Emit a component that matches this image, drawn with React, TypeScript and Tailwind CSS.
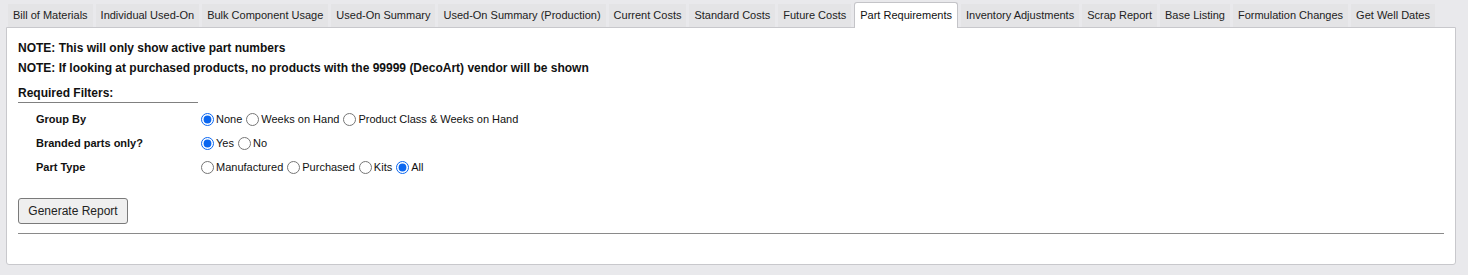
import React from "react";

const tabs = [
  "Bill of Materials",
  "Individual Used-On",
  "Bulk Component Usage",
  "Used-On Summary",
  "Used-On Summary (Production)",
  "Current Costs",
  "Standard Costs",
  "Future Costs",
  "Part Requirements",
  "Inventory Adjustments",
  "Scrap Report",
  "Base Listing",
  "Formulation Changes",
  "Get Well Dates",
];

function Radio({ name, label, checked }: { name: string; label: string; checked?: boolean }) {
  return (
    <label className="flex items-center mr-[4px]">
      <input
        type="radio"
        name={name}
        defaultChecked={checked}
        className="m-0 mr-[2px] w-[13px] h-[13px] accent-[#0a66f0]"
      />
      <span>{label}</span>
    </label>
  );
}

function Row({ label, children }: { label: string; children: React.ReactNode }) {
  return (
    <div className="flex items-center h-[24px]">
      <div className="w-[183px] pl-[18px] font-bold text-[11px]">{label}</div>
      <div className="flex items-center text-[11px]">{children}</div>
    </div>
  );
}

export default function App() {
  return (
    <div
      className="w-[1468px] h-[275px] bg-[#e9e9ec] text-[#111] overflow-hidden"
      style={{ fontFamily: '"Liberation Sans", Arial, sans-serif' }}
    >
      <div className="flex items-end pl-[8px] pt-[2px] h-[27px]">
        {tabs.map((t) => {
          const active = t === "Part Requirements";
          return (
            <div
              key={t}
              className={
                active
                  ? "h-[26px] px-[5px] mr-[3px] flex items-center text-[11px] bg-white border border-b-0 border-[#c4c4c8] rounded-t-[3px] relative top-[1px] text-[#111]"
                  : "h-[23px] px-[5px] mr-[3px] flex items-center text-[11px] bg-[#e4e4e6] text-[#222]"
              }
            >
              {t}
            </div>
          );
        })}
      </div>
      <div className="ml-[6px] w-[1450px] h-[238px] bg-white border border-[#c8c8cc] rounded-b-[3px] px-[11px] pt-[10px]">
        <div className="font-bold text-[12px] leading-[20px]">NOTE: This will only show active part numbers</div>
        <div className="font-bold text-[12px] leading-[20px]">
          NOTE: If looking at purchased products, no products with the 99999 (DecoArt) vendor will be shown
        </div>
        <div className="mt-[8px] w-[180px] border-b border-[#808080] font-bold text-[12px] leading-[15px] pb-[1px]">
          Required Filters:
        </div>
        <div className="mt-[4px]">
          <Row label="Group By">
            <Radio name="g" label="None" checked />
            <Radio name="g" label="Weeks on Hand" />
            <Radio name="g" label="Product Class & Weeks on Hand" />
          </Row>
          <Row label="Branded parts only?">
            <Radio name="b" label="Yes" checked />
            <Radio name="b" label="No" />
          </Row>
          <Row label="Part Type">
            <Radio name="p" label="Manufactured" />
            <Radio name="p" label="Purchased" />
            <Radio name="p" label="Kits" />
            <Radio name="p" label="All" checked />
          </Row>
        </div>
        <button className="mt-[19px] w-[110px] h-[26px] bg-[#efefef] border border-[#7a7a7a] rounded-[3px] text-[12px] text-[#222]">
          Generate Report
        </button>
        <div className="mt-[9px] border-t border-[#8a8a8a] w-[1426px]" />
      </div>
    </div>
  );
}
